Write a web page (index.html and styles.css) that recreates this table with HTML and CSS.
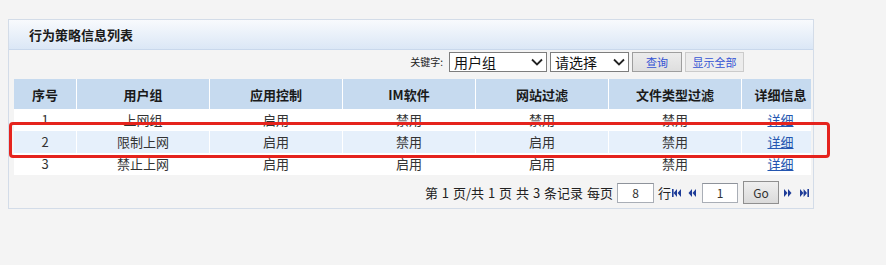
FILE: index.html
```html
<!DOCTYPE html>
<html lang="zh">
<head>
<meta charset="utf-8">
<title>行为策略信息列表</title>
<link rel="stylesheet" href="styles.css">
</head>
<body>
<div class="page">
  <div class="panel">
    <div class="panel-title">行为策略信息列表</div>
    <div class="toolbar">
      <span class="kw">关键字:</span>
      <span class="sel-wrap sel-a">
        <select class="sel"><option>用户组</option></select>
        <svg class="chev" width="12" height="8" viewBox="0 0 12 8"><path d="M1 1.5 L6 6.5 L11 1.5" fill="none" stroke="#222" stroke-width="1.8"/></svg>
      </span>
      <span class="sel-wrap sel-b">
        <select class="sel"><option>请选择</option></select>
        <svg class="chev" width="12" height="8" viewBox="0 0 12 8"><path d="M1 1.5 L6 6.5 L11 1.5" fill="none" stroke="#222" stroke-width="1.8"/></svg>
      </span>
      <button class="btn btn-query">查询</button>
      <button class="btn btn-all">显示全部</button>
    </div>
    <table class="grid">
      <colgroup>
        <col class="c-no"><col class="c-mid"><col class="c-mid"><col class="c-mid"><col class="c-mid"><col class="c-mid"><col class="c-last">
      </colgroup>
      <thead>
        <tr><th>序号</th><th>用户组</th><th>应用控制</th><th>IM软件</th><th>网站过滤</th><th>文件类型过滤</th><th>详细信息</th></tr>
      </thead>
      <tbody>
        <tr class="r1"><td>1</td><td>上网组</td><td>启用</td><td>禁用</td><td>禁用</td><td>禁用</td><td><a href="#">详细</a></td></tr>
        <tr class="r2 alt"><td>2</td><td>限制上网</td><td>启用</td><td>禁用</td><td>启用</td><td>禁用</td><td><a href="#">详细</a></td></tr>
        <tr class="r3"><td>3</td><td>禁止上网</td><td>启用</td><td>启用</td><td>启用</td><td>禁用</td><td><a href="#">详细</a></td></tr>
      </tbody>
    </table>
    <div class="pager">
      <span class="pinfo">第 1 页/共 1 页 共 3 条记录 每页</span>
      <input class="pin pin-size" type="text" value="8">
      <span class="prow">行</span>
      <svg class="nav nav-first" width="9" height="8" viewBox="0 0 9 8"><rect x="0" y="0" width="1.6" height="8" fill="#1e3c98"/><path d="M5 0 L1.6 4 L5 8 Z M9 0 L5.6 4 L9 8 Z" fill="#1e3c98"/></svg>
      <svg class="nav nav-prev" width="8" height="8" viewBox="0 0 8 8"><path d="M4 0 L0.5 4 L4 8 Z M8 0 L4.5 4 L8 8 Z" fill="#1e3c98"/></svg>
      <input class="pin pin-page" type="text" value="1">
      <button class="go">Go</button>
      <svg class="nav nav-next" width="8" height="8" viewBox="0 0 8 8"><path d="M0 0 L3.5 4 L0 8 Z M4 0 L7.5 4 L4 8 Z" fill="#1e3c98"/></svg>
      <svg class="nav nav-last" width="9" height="8" viewBox="0 0 9 8"><path d="M0 0 L3.4 4 L0 8 Z M3.6 0 L7 4 L3.6 8 Z" fill="#1e3c98"/><rect x="7.4" y="0" width="1.6" height="8" fill="#1e3c98"/></svg>
    </div>
  </div>
  <div class="highlight"></div>
</div>
</body>
</html>
```
FILE: styles.css
```css
* { box-sizing: border-box; }
html, body { margin: 0; padding: 0; }
body {
  background: #f4f4f4;
  font-family: "Noto Sans CJK SC", "Liberation Sans", sans-serif;
  font-size: 13px;
  color: #333;
}
.page {
  position: relative;
  width: 886px;
  height: 265px;
  padding: 19px 0 0 8px;
}
.panel {
  width: 806px;
  border: 1px solid #d3dce8;
  background: #f4f4f4;
}
.panel-title {
  height: 30px;
  line-height: 29px;
  padding-left: 20px;
  font-weight: bold;
  font-size: 13px;
  color: #1a1a1a;
  background: linear-gradient(#f8fafd, #dbe7f6);
  border-bottom: 1px solid #c9d8ec;
}
.toolbar {
  height: 29px;
  display: flex;
  justify-content: flex-end;
  align-items: flex-start;
  padding: 2px 69px 0 0;
}
.kw {
  font-size: 10px;
  line-height: 20px;
  color: #222;
  margin-right: 6px;
}
.sel-wrap {
  position: relative;
  display: block;
  height: 20px;
  margin-right: 3px;
}
.sel-a { width: 98px; }
.sel-b { width: 79px; }
.sel {
  appearance: none;
  -webkit-appearance: none;
  width: 100%;
  height: 20px;
  border: 1px solid #7d7d7d;
  border-radius: 0;
  background: #fff;
  font-family: "Noto Sans CJK SC", sans-serif;
  font-size: 14px;
  line-height: 18px;
  padding: 0 0 0 4px;
  color: #111;
}
.chev {
  position: absolute;
  right: 4px;
  top: 6px;
  pointer-events: none;
}
.btn {
  height: 20px;
  padding: 0;
  font-family: "Noto Sans CJK SC", sans-serif;
  font-size: 11px;
  line-height: 18px;
  color: #3453d4;
  border-radius: 0;
}
.btn-query {
  width: 50px;
  border: 1px solid #9e9e9e;
  background: linear-gradient(#ececec, #dedede);
  margin-right: 3px;
}
.btn-all {
  width: 59px;
  border: 1px solid #cbcbcb;
  background: #ececec;
}
.grid {
  margin: 0 0 0 5px;
  width: 797px;
  table-layout: fixed;
  border-collapse: separate;
  border-spacing: 0;
}
.c-no { width: 63px; }
.c-mid { width: 133px; }
.c-last { width: 69px; }
.grid th, .grid td {
  text-align: center;
  padding: 0;
  border-right: 1px solid #fff;
  white-space: nowrap;
}
.grid th:last-child, .grid td:last-child { border-right: 0; padding-left: 8px; }
.grid th {
  height: 30px;
  background: #c6daef;
  font-weight: bold;
  font-size: 13px;
  color: #1a1a1a;
}
.grid td {
  background: #fff;
  font-size: 13px;
  color: #333;
}
.r1 td { height: 22px; line-height: 22px; }
.r2 td { height: 22px; line-height: 22px; }
.r3 td { height: 18px; line-height: 22px; }
.alt td { background: #e6f0fb; }
.grid a { color: #2456b0; text-decoration: underline; }
.pager {
  height: 33px;
  display: flex;
  justify-content: flex-end;
  align-items: center;
  padding: 2px 4px 0 0;
}
.pinfo { color: #222; font-size: 13px; margin-right: 4px; word-spacing: 1px; }
.pin {
  height: 20px;
  border: 1px solid #a9aeb6;
  border-top-color: #8e939b;
  background: #fff;
  text-align: center;
  font-family: "Noto Sans CJK SC", sans-serif;
  font-size: 12px;
  color: #333;
  padding: 0;
}
.pin-size { width: 37px; margin-right: 4px; }
.prow { color: #222; font-size: 13px; margin-right: 1px; }
.nav { display: block; }
.nav-first { margin-right: 7px; }
.nav-prev { margin-right: 6px; }
.pin-page { width: 36px; margin-right: 5px; }
.go {
  width: 36px;
  height: 23px;
  border: 1px solid #8f8f8f;
  background: linear-gradient(#efefef, #dadada);
  font-family: "Noto Sans CJK SC", sans-serif;
  font-size: 12px;
  color: #333;
  padding: 0;
  margin-right: 5px;
  border-radius: 0;
}
.nav-next { margin-right: 8px; }
.highlight {
  position: absolute;
  left: 9px;
  top: 122px;
  width: 821px;
  height: 36px;
  border: 3px solid #e5231d;
  border-radius: 4px;
  pointer-events: none;
}
```
